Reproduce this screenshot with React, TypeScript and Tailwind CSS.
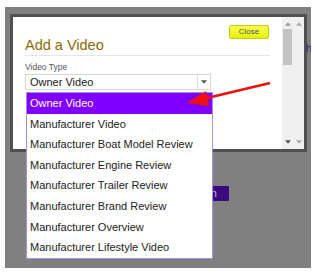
import React from 'react';

const options = [
    'Owner Video',
    'Manufacturer Video',
    'Manufacturer Boat Model Review',
    'Manufacturer Engine Review',
    'Manufacturer Trailer Review',
    'Manufacturer Brand Review',
    'Manufacturer Overview',
    'Manufacturer Lifestyle Video',
];

function Caret({ className }: { className: string }) {
    return (
        <svg width="6" height="4" viewBox="0 0 7 4" className={className}>
            <path d="M0 0 H7 L3.5 4 Z" fill="currentColor" />
        </svg>
    );
}

export default function App() {
    return (
        <div className="relative w-[317px] h-[275px] overflow-hidden bg-white font-['Liberation_Sans',Arial,sans-serif]">
            {/* Overlay */}
            <div className="relative ml-[5px] mt-[7px] w-[306px] h-[261px] overflow-hidden bg-[#808080] pl-[5px] pt-[7px]">
                <span className="absolute left-[301px] top-[33px] text-[11px] text-[#3a2470]">h</span>

                {/* Modal frame */}
                <div className="flex w-[297px] h-[138px] border-[3px] border-[#505050] bg-white">
                    <div className="flex-1 px-[12px] pt-[8px]">
                        <div className="flex justify-end pr-[1px]">
                            <button className="w-[40px] h-[14px] rounded-[2px] border border-[#c8d000] bg-gradient-to-b from-[#f6ff4a] to-[#e4f000] text-[8px] leading-none text-[#555]">
                                Close
                            </button>
                        </div>
                        <h2 className="mt-[-3px] text-[14.5px] leading-[18px] text-[#8a6a08]">Add a Video</h2>
                        <div className="mt-[1px] h-px bg-[#e6e6e6]" />
                        <div className="mt-[6px] text-[8.5px] leading-[10px] text-[#555]">Video Type</div>
                        <div className="mt-[2px] flex w-[186px] h-[16px] items-center border border-[#d6d6d6] bg-white">
                            <span className="flex-1 pl-[4px] text-[11px] leading-none text-[#222]">Owner Video</span>
                            <span className="flex h-full w-[13px] items-center justify-center border-l border-[#dcdcdc]">
                                <Caret className="text-[#555]" />
                            </span>
                        </div>
                    </div>
                    {/* Scrollbars */}
                    <div className="flex w-[22px] gap-[2px] bg-[#f0f0f0] pl-[1px] pt-[5px] pb-[5px]">
                        <div className="flex w-[9px] flex-col items-center">
                            <Caret className="rotate-180 text-[#9a9a9a]" />
                            <div className="mt-[3px] w-[9px] h-[36px] bg-[#c3c3c3]" />
                            <div className="flex-1" />
                            <Caret className="text-[#555]" />
                        </div>
                        <div className="flex w-[9px] flex-col items-center">
                            <Caret className="rotate-180 text-[#aaa]" />
                            <div className="flex-1" />
                            <Caret className="text-[#aaa]" />
                        </div>
                    </div>
                </div>

                <button className="ml-[160px] mt-[34px] flex w-[59px] h-[15px] items-center justify-center rounded-[1px] bg-[#3c0a80] text-[11px] text-[#c8b8e8]">
                    Search
                </button>
            </div>

            {/* Open select list */}
            <ul className="absolute left-[26px] top-[92px] w-[187px] border border-[#a88ee0] bg-white">
                {options.map((o, i) => (
                    <li
                        key={o}
                        className={`flex h-[20.6px] items-center pl-[3px] text-[11px] ${i === 0 ? 'bg-[#8000ff] text-white' : 'text-[#222]'}`}
                    >
                        {o}
                    </li>
                ))}
            </ul>

            {/* Red pointer */}
            <svg className="absolute left-0 top-0" width="317" height="275" viewBox="0 0 317 275">
                <line x1="270" y1="83" x2="203" y2="99" stroke="#ee1010" strokeWidth="2.6" />
                <path d="M187 103 L206 91 L209 106 Z" fill="#ee1010" />
            </svg>
        </div>
    );
}
